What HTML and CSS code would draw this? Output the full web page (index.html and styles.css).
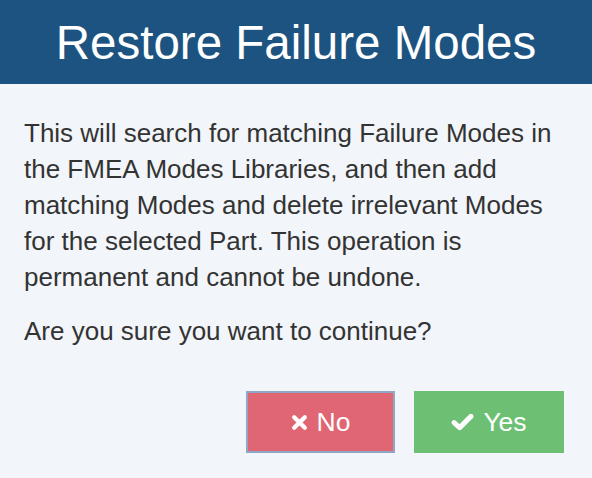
FILE: index.html
```html
<!DOCTYPE html>
<html>
<head>
<meta charset="utf-8">
<link rel="stylesheet" href="styles.css">
</head>
<body>
<div class="dialog">
  <div class="header"><h1 class="title">Restore Failure Modes</h1></div>
  <div class="content">
    <p class="text">This will search for matching Failure Modes in the FMEA Modes Libraries, and then add matching Modes and delete irrelevant Modes for the selected Part. This operation is permanent and cannot be undone.</p>
    <p class="text">Are you sure you want to continue?</p>
  </div>
  <div class="actions">
    <button class="btn btn-no"><svg class="icon" viewBox="0 0 16 16" width="17" height="17"><path d="M3 3 L13 13 M13 3 L3 13" stroke="#fff" stroke-width="4" stroke-linecap="round"/></svg>No</button>
    <button class="btn btn-yes"><svg class="icon" viewBox="0 0 20 16" width="23" height="18"><path d="M2.5 8.5 L7.5 13 L17.5 3" fill="none" stroke="#fff" stroke-width="4.4" stroke-linecap="round" stroke-linejoin="round"/></svg>Yes</button>
  </div>
</div>
</body>
</html>
```
FILE: styles.css
```css
html, body {
  margin: 0;
  padding: 0;
  background: #f2f5f9;
}
body {
  font-family: "Liberation Sans", Arial, sans-serif;
  width: 592px;
  height: 478px;
  overflow: hidden;
}
.header {
  background: #1d5380;
  height: 84px;
  display: flex;
  align-items: center;
  justify-content: center;
}
.title {
  margin: 0;
  color: #fff;
  font-weight: normal;
  font-size: 47.5px;
  line-height: 1;
  padding-top: 2px;
}
.content {
  padding: 31px 24px 0 24px;
}
.text {
  margin: 0 0 18px 0;
  color: #333;
  font-size: 26px;
  line-height: 36px;
}
.actions {
  display: flex;
  justify-content: flex-end;
  gap: 19px;
  padding: 24px 28px 0 0;
}
.btn {
  height: 62px;
  border: none;
  color: #fff;
  font-family: "Liberation Sans", Arial, sans-serif;
  font-size: 26.5px;
  display: flex;
  align-items: center;
  justify-content: center;
  gap: 9px;
  padding: 0;
}
.btn-no {
  width: 149px;
  background: #e06674;
  border: 2px solid #8fa7c4;
}
.btn-yes {
  width: 150px;
  background: #6cbf73;
}
.icon {
  display: block;
}
```
